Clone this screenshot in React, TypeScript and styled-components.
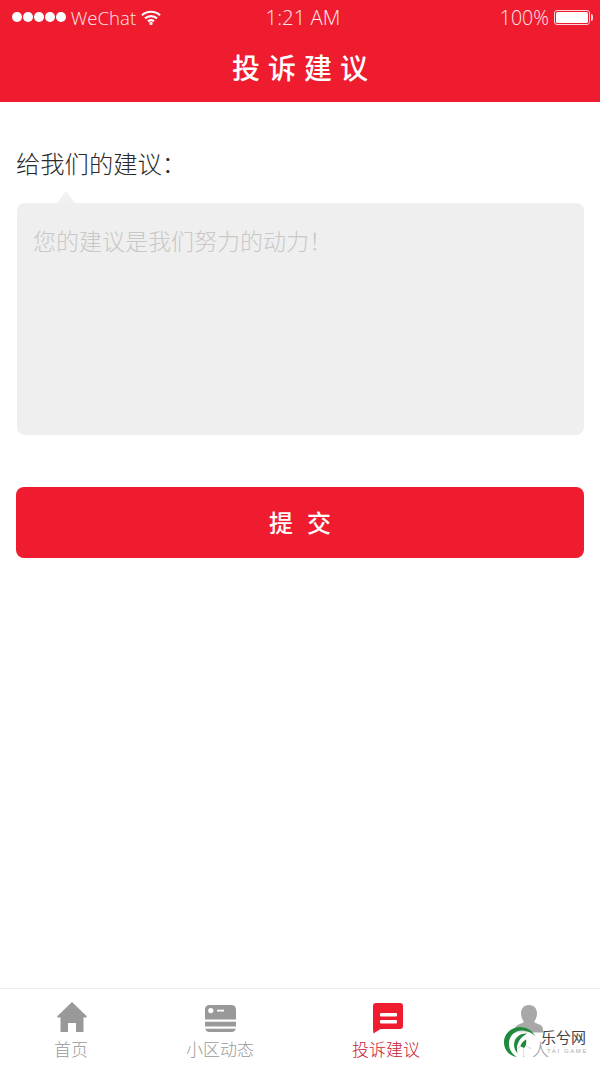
import React from "react";
import styled, { createGlobalStyle } from "styled-components";

const Global = createGlobalStyle`
  html, body { margin: 0; padding: 0; background: #fff; }
  #root { height: 1067px; }
`;

const CJK = `"Noto Sans CJK SC", "Noto Sans", sans-serif`;

const Page = styled.div`
  position: relative;
  width: 600px;
  height: 1067px;
  display: flex;
  flex-direction: column;
  overflow: hidden;
  background: #fff;
  font-family: ${CJK};
`;

const Header = styled.header`
  height: 102px;
  background: #ee1c2e;
  color: #fff;
  display: flex;
  flex-direction: column;
`;

const StatusBar = styled.div`
  height: 34px;
  padding: 0 6px 0 12px;
  display: grid;
  grid-template-columns: 1fr auto 1fr;
  align-items: center;
  font-family: "Open Sans", "Liberation Sans", sans-serif;
  font-size: 19.5px;
  font-weight: 300;
  color: #fde8ea;
`;

const StatusLeft = styled.div`
  display: flex;
  align-items: center;
  gap: 5px;
  font-size: 18.6px;
`;

const Clock = styled.span`
  font-size: 20.4px;
`;

const StatusRight = styled.div`
  display: flex;
  align-items: center;
  justify-content: flex-end;
  gap: 5px;
`;

const Dots = styled.div`
  display: flex;
  gap: 1.2px;
`;

const Dot = styled.span`
  width: 9.8px;
  height: 9.8px;
  border-radius: 50%;
  background: #fff;
`;

const Battery = styled.div`
  position: relative;
  width: 36px;
  height: 15px;
  margin-right: 4px;
  box-sizing: border-box;
  border: 1px solid #fbd5d8;
  border-radius: 3px;
  padding: 1px;
  &::before {
    content: "";
    display: block;
    height: 100%;
    background: #fff;
    border-radius: 1.5px;
  }
  &::after {
    content: "";
    position: absolute;
    right: -4px;
    top: 3px;
    width: 2px;
    height: 7px;
    background: #fbd5d8;
    border-radius: 0 2px 2px 0;
  }
`;

const Title = styled.h1`
  flex: 1;
  margin: 0;
  padding-bottom: 3px;
  display: flex;
  align-items: center;
  justify-content: center;
  font-size: 28px;
  font-weight: 500;
  letter-spacing: 8px;
  text-indent: 8px;
`;

const Main = styled.main`
  flex: 1;
  display: flex;
  flex-direction: column;
  padding: 45px 16px 0;
`;

const Prompt = styled.label`
  font-size: 24.3px;
  line-height: 32px;
  font-weight: 300;
  color: #2a2a2a;
`;

const Bubble = styled.div`
  position: relative;
  margin: 24px 0 0 1px;
  height: 232px;
  box-sizing: border-box;
  padding: 21px 16px;
  background: #efefef;
  border-radius: 8px;
  font-size: 23px;
  line-height: 32px;
  font-weight: 300;
  color: #c8c8c8;
  &::before {
    content: "";
    position: absolute;
    left: 40px;
    top: -12px;
    border-left: 9px solid transparent;
    border-right: 9px solid transparent;
    border-bottom: 12px solid #f1f1f1;
  }
`;

const Submit = styled.button`
  margin-top: 52px;
  height: 71px;
  padding: 0 0 2px;
  border: none;
  border-radius: 8px;
  background: #ee1c2e;
  color: #fff;
  font-family: ${CJK};
  font-size: 24px;
  font-weight: 500;
  letter-spacing: 14px;
  text-indent: 14px;
`;

const TabBar = styled.nav`
  height: 79px;
  border-top: 1px solid #ececec;
  display: grid;
  grid-template-columns: 142px 156px 176px 116px;
  box-sizing: border-box;
`;

const Tab = styled.div<{ $active?: boolean }>`
  display: flex;
  flex-direction: column;
  align-items: center;
  padding-top: 13px;
  font-size: 17px;
  line-height: 24px;
  font-weight: 300;
  color: ${(p) => (p.$active ? "#cc2233" : "#9a9a9a")};
`;

const TabIcon = styled.svg`
  width: 34px;
  height: 34px;
  display: block;
  margin-bottom: 1px;
`;

const Watermark = styled.div`
  position: absolute;
  left: 503px;
  top: 1026px;
  display: flex;
  align-items: flex-start;
  gap: 4px;
`;

const MarkText = styled.div`
  display: flex;
  flex-direction: column;
`;

const MarkName = styled.span`
  font-size: 15px;
  line-height: 22px;
  font-weight: 400;
  color: #444;
`;

const MarkSub = styled.span`
  padding: 0 0 0 6px;
  font-family: "Liberation Sans", sans-serif;
  font-size: 6px;
  line-height: 7px;
  letter-spacing: 1.6px;
  color: #aaa;
`;

export default function App() {
  return (
    <Page>
      <Global />
      <Header>
        <StatusBar>
          <StatusLeft>
            <Dots>
              {[0, 1, 2, 3, 4].map((i) => (
                <Dot key={i} />
              ))}
            </Dots>
            <span>WeChat</span>
            <svg width="20" height="15" viewBox="0 0 20 15" fill="none" stroke="#fff" strokeWidth="2.2">
              <path d="M1 5.2C6 .6 14 .6 19 5.2" />
              <path d="M4 8.4c3.4-3 8.6-3 12 0" />
              <path d="M7 11.4c1.8-1.4 4.2-1.4 6 0" />
              <circle cx="10" cy="13.4" r=".6" fill="#fff" />
            </svg>
          </StatusLeft>
          <Clock>1:21 AM</Clock>
          <StatusRight>
            <span>100%</span>
            <Battery />
          </StatusRight>
        </StatusBar>
        <Title>投诉建议</Title>
      </Header>
      <Main>
        <Prompt>给我们的建议：</Prompt>
        <Bubble>您的建议是我们努力的动力！</Bubble>
        <Submit>提交</Submit>
      </Main>
      <TabBar>
        <Tab>
          <TabIcon viewBox="0 0 34 34">
            <path
              fill="#999"
              d="M18 0 3 14.500 3.700 15.500H6.500V30h7.500V21h8v9h7.500V15.500h2.800l.7-1z"
            />
          </TabIcon>
          首页
        </Tab>
        <Tab>
          <TabIcon viewBox="0 0 34 34">
            <rect x="2" y="3" width="31" height="27" rx="4.500" fill="#999" />
            <circle cx="7.800" cy="8.600" r="2.600" fill="#fff" />
            <rect x="14" y="7.700" width="7" height="1.800" fill="#fff" />
            <rect x="2" y="17.500" width="31" height="2.200" fill="#fff" />
            <rect x="2" y="24.500" width="31" height="2.200" fill="#fff" />
          </TabIcon>
          小区动态
        </Tab>
        <Tab $active>
          <TabIcon viewBox="0 0 34 34">
            <path
              fill="#ee1c2e"
              d="M7 1h24a3 3 0 0 1 3 3v20a3 3 0 0 1-3 3H11.500L4.500 31.500 4 27V4a3 3 0 0 1 3-3z"
            />
            <rect x="11" y="11" width="17" height="3.500" rx="1" fill="#fff" />
            <rect x="11" y="18" width="17" height="3.500" rx="1" fill="#fff" />
          </TabIcon>
          投诉建议
        </Tab>
        <Tab>
          <TabIcon viewBox="0 0 34 34">
            <path
              fill="#a8a8a8"
              d="M14 3c5 0 8 3.500 8 8.500 0 3-1 5.500-2.500 7.500v1.500l6 2.500c1.500.7 2.500 2.500 2.500 4.500v3H0v-3c0-2 1-3.800 2.500-4.500l6-2.500V19C7 17 6 14.500 6 11.500 6 6.500 9 3 14 3z"
            />
          </TabIcon>
          个人
        </Tab>
      </TabBar>
      <Watermark>
        <svg width="34" height="32" viewBox="0 0 34 32">
          <circle cx="17" cy="16" r="15" fill="#fff" fillOpacity=".65" />
          <path
            fill="#1f8a3d"
            d="M32 10C29 4 23 1 17 1 8 1 1 8 1 16.500 1 24 7 30.500 14 31 9 28 5.500 23 6 16.500 6.500 9 13 4 20 4.500 25 5 29 7 32 10z"
          />
          <path fill="#1f8a3d" d="M24 7.500c-6-.5-11 3-12.500 8-1.300 4.500.3 9 3 11.500-1-4-.8-7.500 1-11 2-3.800 5-6.500 8.500-8.500z" />
          <path fill="#1f8a3d" d="M17.500 20c.8-3 2.800-5 5.500-6.500.8 3 .2 6-1.800 8.500-1.300-.5-2.800-1-3.700-2z" />
        </svg>
        <MarkText>
          <MarkName>乐兮网</MarkName>
          <MarkSub>TAI GAME</MarkSub>
        </MarkText>
      </Watermark>
    </Page>
  );
}
